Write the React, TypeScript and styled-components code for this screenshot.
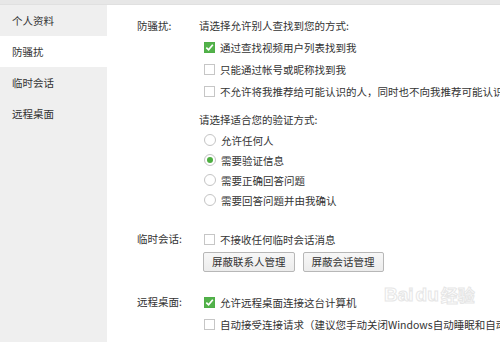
import React from "react";
import styled, { createGlobalStyle } from "styled-components";

const Global = createGlobalStyle`
  html, body { margin: 0; padding: 0; background: #fff; overflow: hidden; }
  body {
    font-family: "Microsoft YaHei", "Noto Sans CJK SC", "Liberation Sans", sans-serif;
    font-size: 10.5px;
    color: #333;
  }
`;

const Page = styled.div`
  width: 500px;
  height: 342px;
  display: flex;
  flex-direction: column;
  position: relative;
`;

const TopBar = styled.div`
  height: 4px;
  background: #e7e7e7;
  border-bottom: 1px solid #e0e0e0;
`;

const Main = styled.div`
  flex: 1;
  display: flex;
  min-height: 0;
`;

const Sidebar = styled.nav`
  width: 107px;
  flex: none;
  background: #efefef;
`;

const NavItem = styled.div<{ $active?: boolean }>`
  height: 31px;
  line-height: 31px;
  padding-left: 12px;
  background: ${(p) => (p.$active ? "#fff" : "transparent")};
  color: #333;
`;

const Content = styled.div`
  flex: 1;
  padding: 11px 0 0 30px;
  white-space: nowrap;
  overflow: hidden;
`;

const Section = styled.div<{ $mt?: number }>`
  display: grid;
  grid-template-columns: 62px 1fr;
  margin-top: ${(p) => p.$mt ?? 0}px;
`;

const Label = styled.div<{ $lh: number }>`
  line-height: ${(p) => p.$lh}px;
`;

const Body = styled.div`
  display: flex;
  flex-direction: column;
`;

const Heading = styled.div<{ $mt?: number }>`
  line-height: 20px;
  height: 20px;
  margin-top: ${(p) => p.$mt ?? 0}px;
`;

const Row = styled.label<{ $h: number }>`
  display: flex;
  align-items: center;
  gap: 5px;
  height: ${(p) => p.$h}px;
  padding-left: 5px;
`;

const Box = styled.span<{ $on?: boolean }>`
  width: 11px;
  height: 11px;
  flex: none;
  box-sizing: border-box;
  border: 1px solid ${(p) => (p.$on ? "#4fae47" : "#c6c6c6")};
  background: ${(p) => (p.$on ? "#52b24a" : "#fff")};
  display: flex;
  align-items: center;
  justify-content: center;
`;

const Radio = styled.span<{ $on?: boolean }>`
  width: 12px;
  height: 12px;
  flex: none;
  box-sizing: border-box;
  border-radius: 50%;
  border: 1px solid #c4c4c4;
  background: #fff;
  display: flex;
  align-items: center;
  justify-content: center;
  &::after {
    content: "";
    display: ${(p) => (p.$on ? "block" : "none")};
    width: 6px;
    height: 6px;
    border-radius: 50%;
    background: #4cae3f;
  }
`;

const Buttons = styled.div`
  display: flex;
  gap: 8px;
  margin-top: 2px;
  padding-left: 4px;
`;

const Button = styled.button`
  height: 20px;
  padding: 0 8px;
  box-sizing: border-box;
  border: 1px solid #b7b7b7;
  border-radius: 2px;
  background: linear-gradient(#f7f7f7, #ececec);
  font: inherit;
  color: #333;
  line-height: 18px;
`;

const Watermark = styled.div`
  position: absolute;
  left: 384px;
  top: 282px;
  display: flex;
  align-items: center;
  gap: 2px;
  font-family: "Liberation Sans", "Noto Sans CJK SC", sans-serif;
  font-size: 19px;
  font-weight: bold;
  color: transparent;
  -webkit-text-stroke: 1px #e6e6e6;
  pointer-events: none;
`;

const Check = () => (
  <svg width="9" height="9" viewBox="0 0 9 9">
    <path d="M1.3 4.6 L3.6 6.8 L7.8 1.8" fill="none" stroke="#fff" strokeWidth="1.7" />
  </svg>
);

const CheckRow = ({ on, text, h = 22 }: { on?: boolean; text: string; h?: number }) => (
  <Row $h={h}>
    <Box $on={on}>{on && <Check />}</Box>
    <span>{text}</span>
  </Row>
);

const RadioRow = ({ on, text }: { on?: boolean; text: string }) => (
  <Row $h={20}>
    <Radio $on={on} />
    <span>{text}</span>
  </Row>
);

export default function App() {
  return (
    <Page>
      <Global />
      <TopBar />
      <Main>
        <Sidebar>
          <NavItem>个人资料</NavItem>
          <NavItem $active>防骚扰</NavItem>
          <NavItem>临时会话</NavItem>
          <NavItem>远程桌面</NavItem>
        </Sidebar>
        <Content>
          <Section>
            <Label $lh={20}>防骚扰:</Label>
            <Body>
              <Heading>请选择允许别人查找到您的方式:</Heading>
              <CheckRow on text="通过查找视频用户列表找到我" />
              <CheckRow text="只能通过帐号或昵称找到我" />
              <CheckRow text="不允许将我推荐给可能认识的人，同时也不向我推荐可能认识的人" />
              <Heading $mt={8}>请选择适合您的验证方式:</Heading>
              <RadioRow text="允许任何人" />
              <RadioRow on text="需要验证信息" />
              <RadioRow text="需要正确回答问题" />
              <RadioRow text="需要回答问题并由我确认" />
            </Body>
          </Section>
          <Section $mt={18}>
            <Label $lh={22}>临时会话:</Label>
            <Body>
              <CheckRow text="不接收任何临时会话消息" />
              <Buttons>
                <Button>屏蔽联系人管理</Button>
                <Button>屏蔽会话管理</Button>
              </Buttons>
            </Body>
          </Section>
          <Section $mt={19}>
            <Label $lh={22}>远程桌面:</Label>
            <Body>
              <CheckRow on text="允许远程桌面连接这台计算机" />
              <CheckRow text="自动接受连接请求（建议您手动关闭Windows自动睡眠和自动锁屏）" h={23} />
            </Body>
          </Section>
        </Content>
      </Main>
      <Watermark>
        <span>Bai</span>
        <span>du</span>
        <span style={{ fontSize: 17 }}>经验</span>
      </Watermark>
    </Page>
  );
}
